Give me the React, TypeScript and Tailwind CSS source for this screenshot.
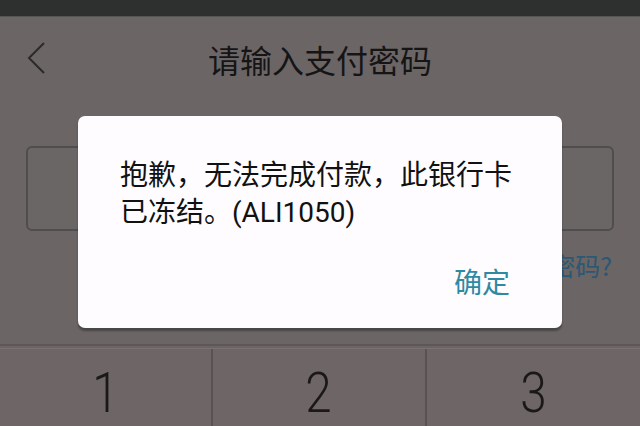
import React from "react";

const cjk = { fontFamily: '"Noto Sans CJK SC", "Noto Sans", sans-serif' };

export default function App() {
  return (
    <div className="relative w-[640px] h-[426px] overflow-hidden bg-[#6b6566]" style={cjk}>
      {/* status bar */}
      <div className="h-[17px] bg-[#2e302f] border-b border-[#555]" />

      {/* header */}
      <div className="relative flex items-center justify-center h-[86px] pb-[1px]">
        <svg className="absolute left-[25px] top-[24px]" width="22" height="34" viewBox="0 0 22 34">
          <path d="M19 2 L4 17 L19 32" fill="none" stroke="#2b2a2a" strokeWidth="2" />
        </svg>
        <h1 className="text-[32px] leading-none text-[#161515] -mt-[1px]">请输入支付密码</h1>
      </div>

      {/* password box */}
      <div className="mx-[26px] mt-[43px] h-[85px] rounded-[6px] border-2 border-[#4f4d4d] bg-[#6a6666]" />

      <div className="flex justify-end pr-[28px] mt-[22px] h-[40px]">
        <span className="text-[25px] leading-none text-[#2b5872]">忘记密码?</span>
      </div>

      {/* keypad */}
      <div className="absolute left-0 right-0 top-[344px] bottom-0 flex flex-col border-t-2 border-[#5d5757]">
        <div className="h-[3px] border-b border-[#7a7272]" />
        <div className="grid grid-cols-3 flex-1">
          {["1", "2", "3"].map((n, i) => (
            <div
              key={n}
              className={`flex justify-center pt-[16px] bg-[#6d6566] ${i < 2 ? "border-r-2 border-[#595353]" : ""}`}
            >
              <span className="text-[56px] leading-[56px] h-[56px] font-light text-[#1a1818] scale-x-[0.85]" style={{ fontFamily: "Roboto, sans-serif" }}>
                {n}
              </span>
            </div>
          ))}
        </div>
      </div>

      {/* dialog */}
      <div className="absolute left-[78px] top-[116px] w-[484px] h-[212px] rounded-[7px] bg-[#fefcfe] shadow-[0_3px_2px_rgba(40,40,40,0.5)] flex flex-col pl-[42px] pr-[20px] pt-[39px]">
        <p className="text-[28px] leading-[37px] text-[#111] whitespace-nowrap">
          抱歉，无法完成付款，此银行卡
          <br />
          已冻结。<span style={{ fontFamily: "Roboto, sans-serif" }}>(ALI1050)</span>
        </p>
        <div className="flex justify-end mt-[36px] pr-[32px]">
          <span className="text-[28px] leading-none text-[#2e8aa3]">确定</span>
        </div>
      </div>
    </div>
  );
}
